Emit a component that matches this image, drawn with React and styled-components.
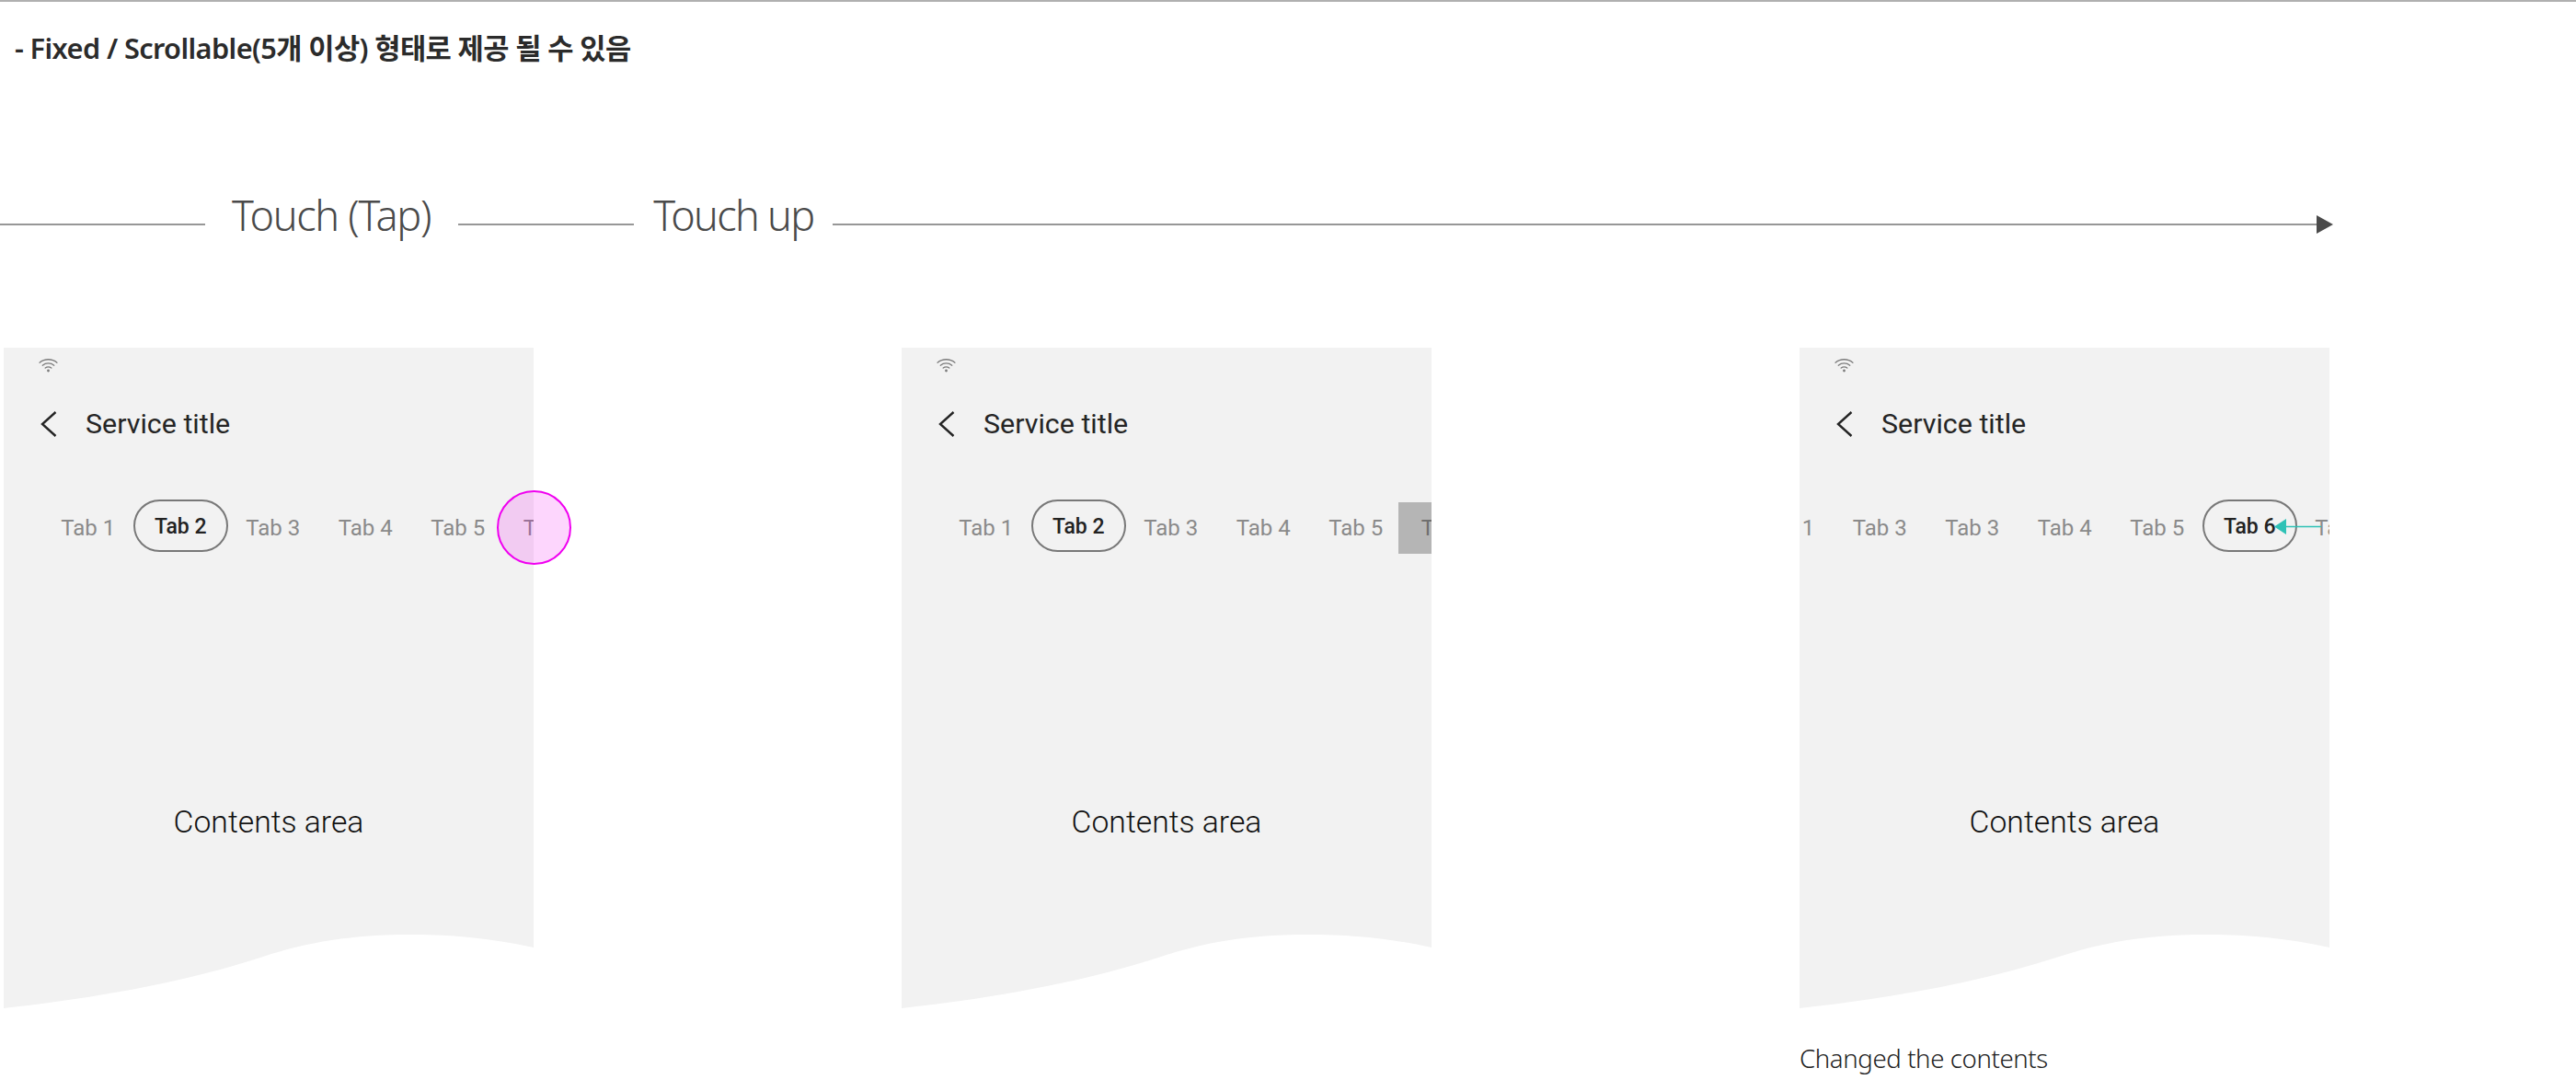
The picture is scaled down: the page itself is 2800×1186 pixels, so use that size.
import React from "react";
import styled, { createGlobalStyle } from "styled-components";

const GlobalStyle = createGlobalStyle`
  html, body {
    margin: 0;
    padding: 0;
    background: #fff;
  }
  body {
    width: 2800px;
    height: 1186px;
    overflow: hidden;
    font-family: "Roboto", sans-serif;
  }
`;

const Page = styled.div`
  width: 2800px;
  height: 1186px;
  border-top: 2px solid #b0b0b0;
  box-sizing: border-box;
`;

const Heading = styled.h1`
  margin: 0;
  padding: 29px 0 0 16px;
  height: 42px;
  font-family: "Noto Sans", "Noto Sans CJK KR", sans-serif;
  font-size: 30.7px;
  line-height: 42px;
  font-weight: 600;
  letter-spacing: -0.6px;
  color: #2b2b2b;
  white-space: nowrap;
`;

const Timeline = styled.div`
  display: flex;
  align-items: center;
  width: 2536px;
  height: 60px;
  margin-top: 131px;
`;

const Rule = styled.div`
  flex: ${(p) => (p.$width ? `0 0 ${p.$width}px` : "1")};
  height: 2px;
  margin-top: 20px;
  background: #979797;
`;

const StepLabel = styled.div`
  flex: 0 0 auto;
  margin: 0 ${(p) => p.$right}px 0 ${(p) => p.$left}px;
  font-family: "Noto Sans", sans-serif;
  font-size: 45px;
  line-height: 60px;
  font-weight: 300;
  letter-spacing: ${(p) => p.$tracking}px;
  color: #4a4a4a;
`;

const ArrowHead = styled.svg`
  flex: 0 0 18px;
  width: 18px;
  height: 20px;
  margin-top: 20px;
`;

const Stage = styled.div`
  display: flex;
  gap: 400px;
  padding-left: 4px;
  margin-top: 114px;
`;

const Column = styled.div`
  display: flex;
  flex-direction: column;
  width: 576px;
`;

const Device = styled.div`
  position: relative;
  width: 576px;
  height: 718px;
`;

const Screen = styled.div`
  display: flex;
  flex-direction: column;
  width: 576px;
  height: 718px;
  background: #f2f2f2;
  overflow: hidden;
  clip-path: path("M0 0H576V652C530 642 490 638 441 638C380 638 330 646 282 662C190 692 90 708 0 718Z");
`;

const StatusBar = styled.div`
  height: 47px;
  padding: 11px 0 0 38px;
  box-sizing: border-box;
`;

const WifiIcon = styled.svg`
  display: block;
  width: 21px;
  height: 16px;
`;

const Header = styled.div`
  display: flex;
  align-items: center;
  gap: 31px;
  height: 72px;
  padding-left: 40px;
`;

const BackIcon = styled.svg`
  flex: 0 0 18px;
  width: 18px;
  height: 28px;
`;

const Title = styled.div`
  font-size: 30.4px;
  line-height: 36px;
  color: #252525;
`;

const TabRow = styled.div`
  display: flex;
  align-items: flex-start;
  height: 57px;
  margin: 46px 0 0 ${(p) => p.$offset}px;
`;

const Tab = styled.div`
  flex: 0 0 100.5px;
  box-sizing: border-box;
  height: 57px;
  font-size: 24px;
  line-height: 62px;
  text-align: center;
  white-space: nowrap;
  color: #8a8a8a;
`;

const ActiveTab = styled(Tab)`
  flex: 0 0 103px;
  margin: 0 -1.25px;
  border: 2px solid #787878;
  border-radius: 29px;
  font-size: 23px;
  line-height: 55px;
  font-weight: 500;
  color: #222;
`;

const PressedTab = styled(Tab)`
  flex: 0 0 104.5px;
  height: 56px;
  margin: 3px 0 0 -4px;
  padding-left: 4px;
  line-height: 56px;
  background: #b5b5b5;
  color: #6f6f6f;
`;

const ContentsArea = styled.div`
  margin-top: 274px;
  font-size: 33.7px;
  line-height: 40px;
  font-weight: 300;
  text-align: center;
  color: #111;
`;

const TouchPoint = styled.div`
  position: absolute;
  left: 536px;
  top: 155px;
  width: 81px;
  height: 81px;
  box-sizing: border-box;
  border: 2px solid #f000f0;
  border-radius: 50%;
  background: rgba(245, 0, 245, 0.16);
`;

const SwipeArrow = styled.svg`
  position: absolute;
  left: 514px;
  top: 184px;
  width: 54px;
  height: 21px;
`;

const Caption = styled.div`
  margin-top: 36px;
  font-family: "Noto Sans", sans-serif;
  font-size: 27.6px;
  line-height: 36px;
  font-weight: 300;
  letter-spacing: -0.4px;
  color: #222;
  white-space: nowrap;
`;

const screens = [
  {
    offset: 41.5,
    tabs: ["Tab 1", "Tab 2", "Tab 3", "Tab 4", "Tab 5", "Tab 6"],
    active: 1,
    touch: true,
  },
  {
    offset: 41.5,
    tabs: ["Tab 1", "Tab 2", "Tab 3", "Tab 4", "Tab 5", "Tab 6"],
    active: 1,
    pressed: 5,
  },
  {
    offset: -63.5,
    tabs: ["Tab 1", "Tab 3", "Tab 3", "Tab 4", "Tab 5", "Tab 6", "Tab 7"],
    active: 5,
    swipe: true,
    caption: "Changed the contents",
  },
];

const Wifi = () => (
  <WifiIcon viewBox="0 0 21 16" fill="none" stroke="#7c7c7c" strokeWidth="1.3" strokeLinecap="round">
    <path d="M1 5.2C6.4 .6 14.6 .6 20 5.2" />
    <path d="M4.2 8.2C7.8 5.2 13.2 5.2 16.8 8.2" />
    <path d="M7.2 11C9 9.6 12 9.6 13.8 11" />
    <circle cx="10.5" cy="14" r="1.4" fill="#7c7c7c" stroke="none" />
  </WifiIcon>
);

const Back = () => (
  <BackIcon viewBox="0 0 18 28" fill="none" stroke="#252525" strokeWidth="2.4">
    <path d="M16.5 1L2 14L16.5 27" />
  </BackIcon>
);

const Phone = ({ offset, tabs, active, pressed, touch, swipe, caption }) => (
  <Column>
    <Device>
      <Screen>
        <StatusBar>
          <Wifi />
        </StatusBar>
        <Header>
          <Back />
          <Title>Service title</Title>
        </Header>
        <TabRow $offset={offset}>
          {tabs.map((label, i) => {
            if (i === active) return <ActiveTab key={i}>{label}</ActiveTab>;
            if (i === pressed) return <PressedTab key={i}>{label}</PressedTab>;
            return <Tab key={i}>{label}</Tab>;
          })}
        </TabRow>
        <ContentsArea>Contents area</ContentsArea>
      </Screen>
      {touch && <TouchPoint />}
      {swipe && (
        <SwipeArrow viewBox="0 0 54 21">
          <path d="M15 10.5H53" stroke="#2fc2b6" strokeWidth="1.6" />
          <path d="M2 10.5L15 2V19Z" fill="#2fc2b6" />
        </SwipeArrow>
      )}
    </Device>
    {caption && <Caption>{caption}</Caption>}
  </Column>
);

const App = () => (
  <>
    <GlobalStyle />
    <Page>
      <Heading>- Fixed / Scrollable(5개 이상) 형태로 제공 될 수 있음</Heading>
      <Timeline>
        <Rule $width={223} />
        <StepLabel $left={29} $right={30} $tracking={-1.3}>Touch (Tap)</StepLabel>
        <Rule $width={191} />
        <StepLabel $left={21} $right={21} $tracking={-1.7}>Touch up</StepLabel>
        <Rule />
        <ArrowHead viewBox="0 0 18 20">
          <path d="M0 0L18 10L0 20Z" fill="#4a4a4a" />
        </ArrowHead>
      </Timeline>
      <Stage>
        {screens.map((s, i) => (
          <Phone key={i} {...s} />
        ))}
      </Stage>
    </Page>
  </>
);

export default App;
